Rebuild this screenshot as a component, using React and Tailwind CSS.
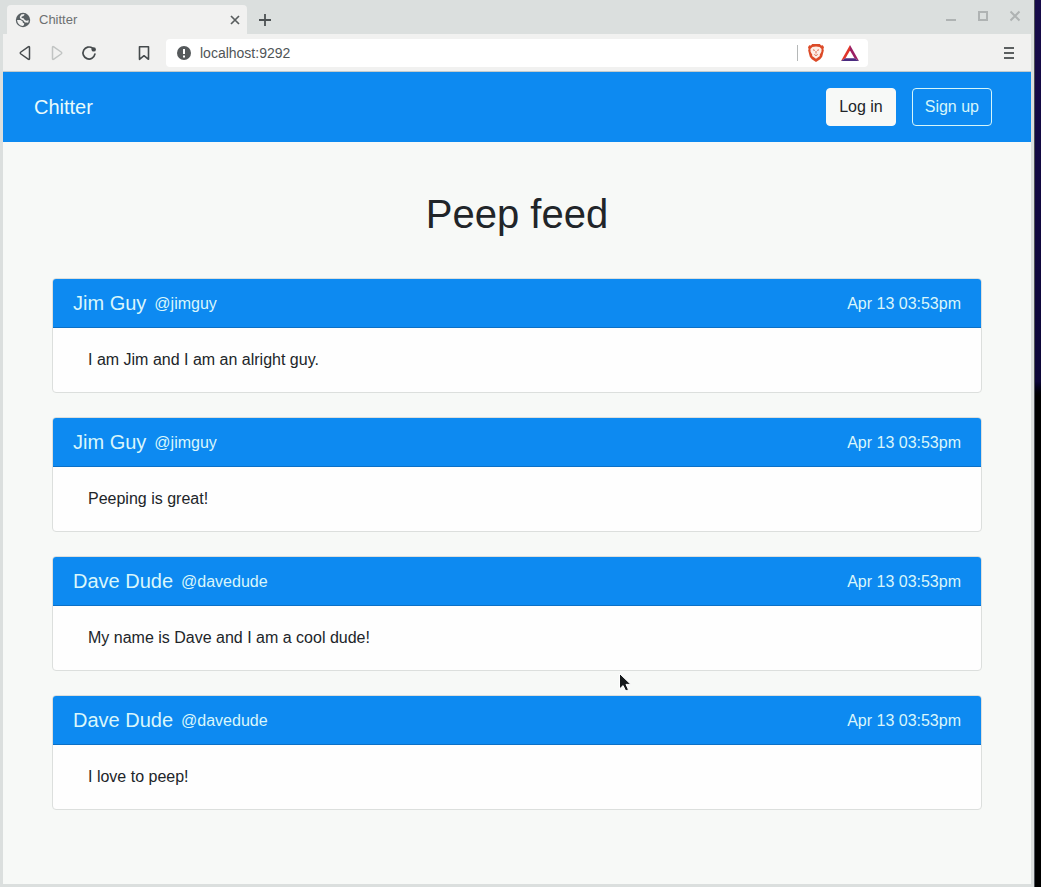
import React from "react";

const peeps = [
  { name: "Jim Guy", handle: "@jimguy", text: "I am Jim and I am an alright guy." },
  { name: "Jim Guy", handle: "@jimguy", text: "Peeping is great!" },
  { name: "Dave Dude", handle: "@davedude", text: "My name is Dave and I am a cool dude!" },
  { name: "Dave Dude", handle: "@davedude", text: "I love to peep!" },
];

function IconButton({ label, className = "", children }) {
  return (
    <button type="button" aria-label={label} className={`flex h-5 w-5 shrink-0 items-center justify-center ${className}`}>
      {children}
    </button>
  );
}

function Globe() {
  return (
    <svg width="16" height="16" viewBox="0 0 16 16" aria-hidden="true" className="shrink-0">
      <circle cx="8" cy="8" r="7.2" fill="#596063" />
      <path d="M6.200 2.400 9.400 2 9.200 3.200 8 4.200 6.800 4.400 6.500 6l2 .3 1.300 1.600 1.600.8 2.400-.4-.6 2.500-1.400-.4-1.900.2L8.400 8.400 5.500 6.900 4.700 5Z" fill="#f1f1f0" />
      <path d="M2 8h3.500l2 1.300.4 1.500 1.400.7-.4 1.700-1.400.8L5 13.300 2.800 11Z" fill="#f1f1f0" />
    </svg>
  );
}

function TabStrip() {
  return (
    <div className="flex h-[34px] items-end bg-[#dbdfde] pl-1">
      <div className="flex h-[29px] w-60 items-center rounded-t bg-[#f1f1f0] pr-1 pl-2">
        <Globe />
        <span className="ml-2 flex-1 text-[13px] text-[#6d7071]">Chitter</span>
        <IconButton label="Close tab" className="-mr-1 w-6">
          <svg width="10" height="10" viewBox="0 0 10 10" stroke="#595d5e" strokeWidth="1.7">
            <path d="m1 1 8 8M9 1 1 9" />
          </svg>
        </IconButton>
      </div>
      <IconButton label="New tab" className="mb-1 ml-2">
        <svg width="12" height="12" viewBox="0 0 12 12" stroke="#4c5153" strokeWidth="1.8">
          <path d="M6 0v12M0 6h12" />
        </svg>
      </IconButton>
      <div className="mr-[6px] mb-2 ml-auto flex gap-3">
        <IconButton label="Minimize">
          <svg width="12" height="12" viewBox="0 0 12 12" stroke="#afb3b3" strokeWidth="2">
            <path d="M1 10h10" />
          </svg>
        </IconButton>
        <IconButton label="Maximize">
          <svg width="12" height="12" viewBox="0 0 12 12" fill="none" stroke="#afb3b3" strokeWidth="2">
            <path d="M2 2h8v8H2Z" />
          </svg>
        </IconButton>
        <IconButton label="Close window">
          <svg width="12" height="12" viewBox="0 0 12 12" stroke="#afb3b3" strokeWidth="2">
            <path d="m1.5 1.5 9 9M10.5 1.5l-9 9" />
          </svg>
        </IconButton>
      </div>
    </div>
  );
}

function BraveLion() {
  return (
    <svg width="18" height="20" viewBox="0 0 18 20">
      <path d="M5.200 1h7.600l1.300 1.400 1.700-.1 1.200 2-.6 1.600.4 1.600-1.600 6.300-2 2.400L9 19l-4.200-2.800-2-2.400L1.200 7.500l.4-1.600L1 4.300l1.200-2 1.700.1Z" fill="#dc4a27" />
      <path d="M5.400 3.900 9 3.500l3.600.4 2 2.200-.2 2.700-1.700 3L12.900 13 9 15.700 5.100 13l.2-1.200-1.700-3-.2-2.700Z" fill="#fdeee6" />
      <path d="m6 6.800 1.800.6M12 6.800l-1.800.6M9 8v2.500M7.300 11.500 9 12.600l1.700-1.100" fill="none" stroke="#dc6a4c" strokeWidth="1" />
    </svg>
  );
}

function Bat() {
  return (
    <svg width="18" height="16" viewBox="0 0 18 16">
      <path d="M9 0 0 16l4.500-2.700L9 5.500Z" fill="#e0352b" />
      <path d="m9 0 9 16-4.500-2.700L9 5.500Z" fill="#9b1f63" />
      <path d="M0 16h18l-4.500-2.700h-9Z" fill="#4b2b80" />
    </svg>
  );
}

function Toolbar() {
  return (
    <div className="flex h-[38px] items-center border-b border-[#c3cbcc] bg-[#f1f1f0] pr-3 pl-3">
      <IconButton label="Back">
        <svg width="14" height="16" viewBox="0 0 14 16" fill="none" stroke="#454a4c" strokeWidth="1.5" strokeLinejoin="round">
          <path d="M11.500 2.600v10.800Q11.500 15 10.200 14.100L2.900 9Q1.600 8 2.900 7L10.200 1.900Q11.500 1 11.500 2.600Z" />
        </svg>
      </IconButton>
      <IconButton label="Forward" className="ml-3">
        <svg width="14" height="16" viewBox="0 0 14 16" fill="none" stroke="#c1c4c3" strokeWidth="1.5" strokeLinejoin="round">
          <path d="M2.500 2.600v10.800Q2.500 15 3.800 14.100L11.100 9Q12.400 8 11.100 7L3.800 1.900Q2.500 1 2.500 2.600Z" />
        </svg>
      </IconButton>
      <IconButton label="Reload" className="ml-3">
        <svg width="16" height="16" viewBox="0 0 16 16" fill="none">
          <path d="M11.600 3.200A6 6 0 1 0 13.900 9.200" stroke="#454a4c" strokeWidth="1.7" strokeLinecap="round" />
          <circle cx="12.7" cy="4.4" r="2.2" fill="#454a4c" />
        </svg>
      </IconButton>
      <IconButton label="Bookmark" className="ml-[35px]">
        <svg width="12" height="16" viewBox="0 0 12 16" fill="none" stroke="#454a4c" strokeWidth="1.6" strokeLinejoin="round">
          <path d="M1.500 1.700h9v12.600L6 10.700l-4.500 3.600Z" />
        </svg>
      </IconButton>
      <div className="ml-3 flex h-7 w-[702px] min-w-0 items-center rounded bg-white pr-2 pl-[11px]">
        <svg width="14" height="14" viewBox="0 0 14 14" className="shrink-0" aria-hidden="true">
          <circle cx="7" cy="7" r="7" fill="#55595b" />
          <path d="M6 3h2v5H6ZM6 9.500h2v2H6Z" fill="#fff" />
        </svg>
        <input
          aria-label="Address"
          defaultValue="localhost:9292"
          className="ml-2 h-6 min-w-0 flex-1 bg-transparent pl-px text-sm text-[#505557] outline-none"
        />
        <span className="h-4 w-px bg-[#b5b8b8]" />
        <IconButton label="Brave Shields" className="ml-2">
          <BraveLion />
        </IconButton>
        <IconButton label="Rewards" className="ml-[14px]">
          <Bat />
        </IconButton>
      </div>
      <IconButton label="Menu" className="ml-auto">
        <svg width="10" height="12" viewBox="0 0 10 12" stroke="#5b5f60" strokeWidth="2">
          <path d="M0 1h10M0 6h10M0 11h10" />
        </svg>
      </IconButton>
    </div>
  );
}

function Navbar() {
  return (
    <nav className="flex h-[70px] items-center bg-[#0d8af1] pr-[39px] pl-[31px]">
      <a href="#" className="mr-auto text-xl text-[#e9fbfb]">Chitter</a>
      <button type="button" className="h-[38px] rounded border border-[#f7f9f7] bg-[#f7f9f7] px-3 text-base text-[#212529]">
        Log in
      </button>
      <button type="button" className="ml-4 h-[38px] rounded border border-[#d5f6fa] px-3 text-base text-[#d5f6fa]">
        Sign up
      </button>
    </nav>
  );
}

function Peep({ name, handle, text }) {
  return (
    <article className="overflow-hidden rounded border border-[#dcdfdd] bg-[#fefefe]">
      <header className="flex items-end border-b border-[#0c70c6] bg-[#0d8af1] px-5 py-[11px] text-[#d9f6fb]">
        <h2 className="text-xl leading-[26px]">{name}</h2>
        <span className="ml-2">{handle}</span>
        <time className="ml-auto">Apr 13 03:53pm</time>
      </header>
      <p className="px-[35px] py-5 text-[#212529]">{text}</p>
    </article>
  );
}

function Cursor() {
  return (
    <svg width="14" height="20" viewBox="0 0 14 20" aria-hidden="true" className="absolute top-[672px] left-[618px]">
      <path d="M1.500 1.500v15.500l3.600-3.400 2.600 5.400 2.800-1.300-2.500-5.300h4.900Z" fill="#15191b" stroke="#fff" strokeWidth="1" />
    </svg>
  );
}

export default function App() {
  return (
    <div className="relative flex min-h-screen bg-linear-to-b from-[#170b4a] from-0% via-[#0c0638] via-[43%] to-black to-[45%] pr-[6px] font-['Liberation_Sans',Arial,sans-serif] text-base">
      <div className="flex min-w-0 flex-1 flex-col border-r border-[#4c5056] bg-[#dbdfde] pr-[3px] pb-[3px] pl-[3px]">
        <TabStrip />
        <Toolbar />
        <div className="flex-1 bg-[#f7f9f7]">
          <Navbar />
          <main className="px-[49px] pt-12 pb-[74px]">
            <h1 className="text-center text-[40px] leading-[48px] text-[#212529]">Peep feed</h1>
            <div className="mt-10 flex flex-col gap-6">
              {peeps.map((peep) => (
                <Peep key={peep.text} {...peep} />
              ))}
            </div>
          </main>
        </div>
      </div>
      <Cursor />
    </div>
  );
}
